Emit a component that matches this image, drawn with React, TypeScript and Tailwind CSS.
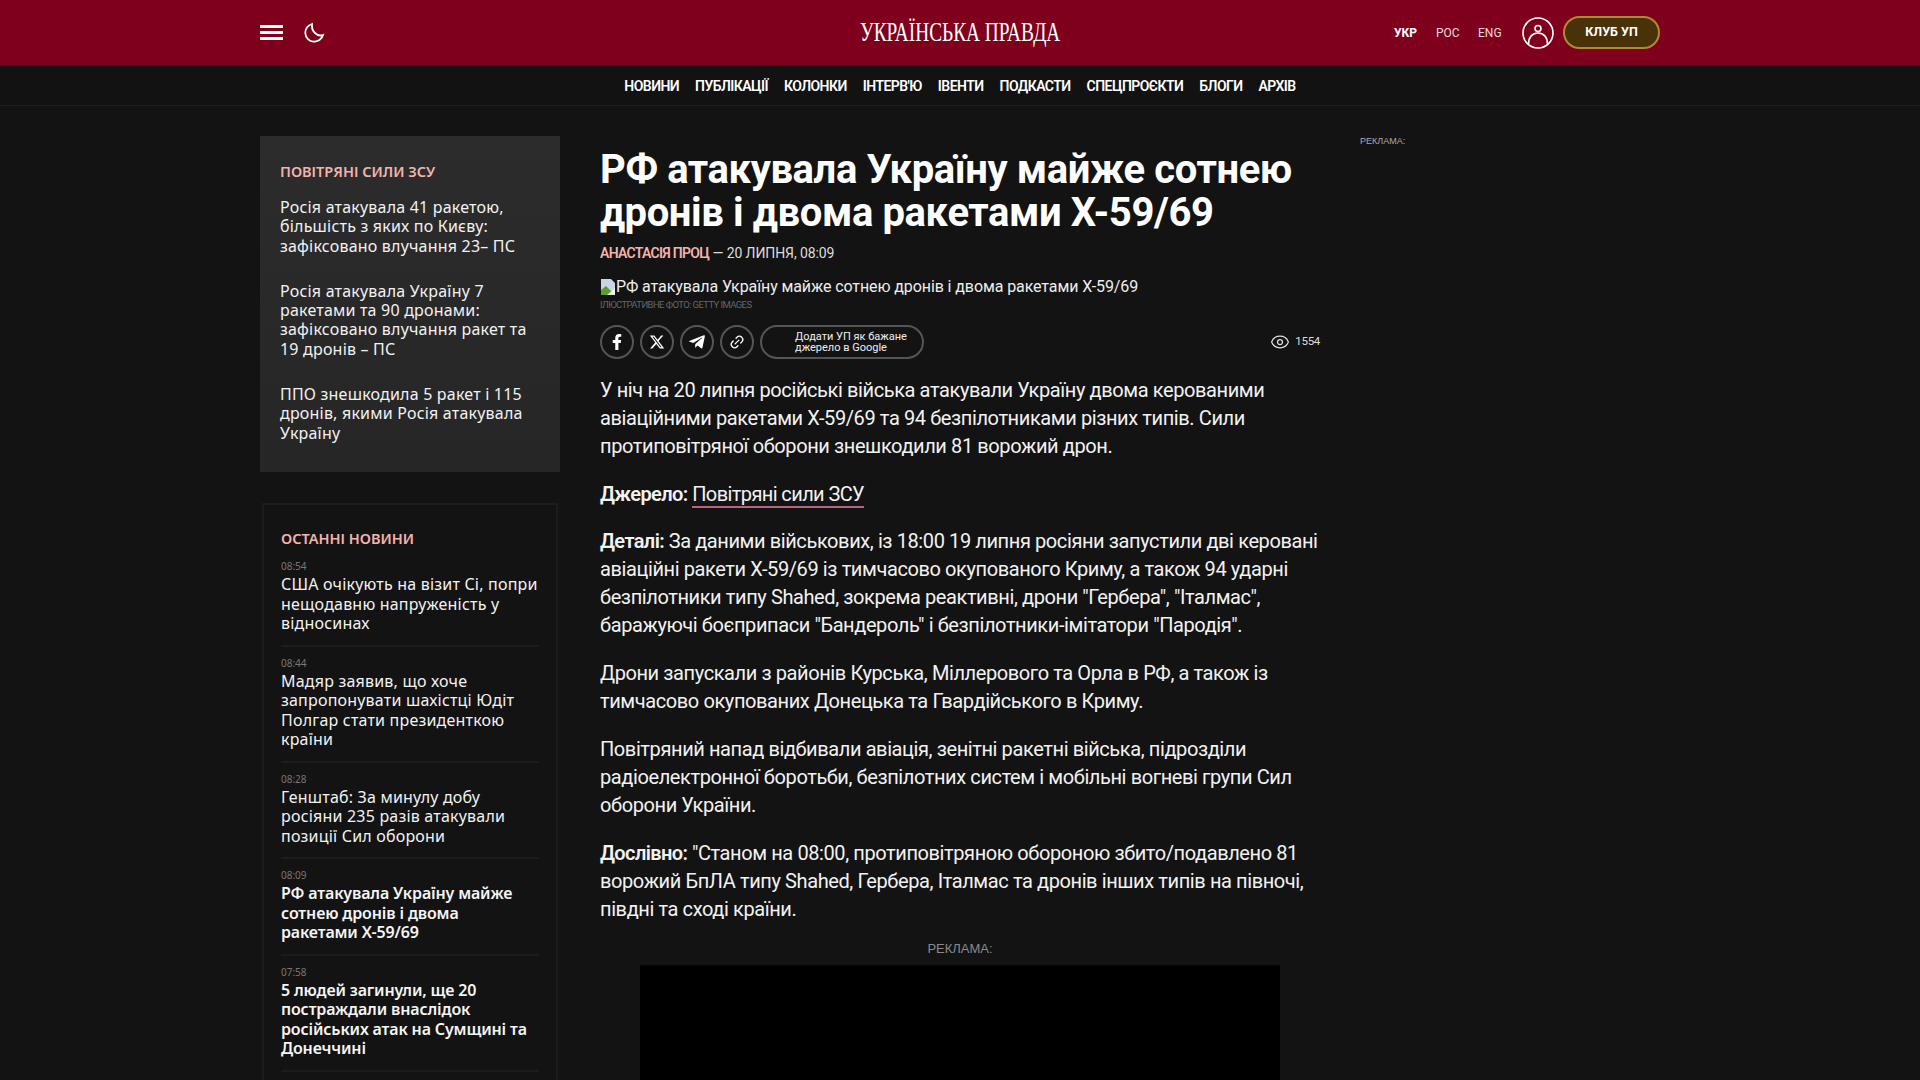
import { Eye, Link2 } from "lucide-react";
import { FaFacebookF, FaTelegramPlane } from "react-icons/fa";
import { FaXTwitter } from "react-icons/fa6";

const navItems = ["Новини", "Публікації", "Колонки", "Інтерв'ю", "Івенти", "Подкасти", "Спецпроєкти", "Блоги", "Архів"];

const topic = [
  ["Росія атакувала 41 ракетою,", "більшість з яких по Києву:", "зафіксовано влучання 23– ПС"],
  ["Росія атакувала Україну 7", "ракетами та 90 дронами:", "зафіксовано влучання ракет та", "19 дронів – ПС"],
  ["ППО знешкодила 5 ракет і 115", "дронів, якими Росія атакувала", "Україну"],
];

const latest = [
  { time: "08:54", lines: ["США очікують на візит Сі, попри", "нещодавню напруженість у", "відносинах"] },
  { time: "08:44", lines: ["Мадяр заявив, що хоче", "запропонувати шахістці Юдіт", "Полгар стати президенткою", "країни"] },
  { time: "08:28", lines: ["Генштаб: За минулу добу", "росіяни 235 разів атакували", "позиції Сил оборони"] },
  { time: "08:09", bold: true, lines: ["РФ атакувала Україну майже", "сотнею дронів і двома", "ракетами Х-59/69"] },
  { time: "07:58", bold: true, lines: ["5 людей загинули, ще 20", "постраждали внаслідок", "російських атак на Сумщині та", "Донеччині"] },
];

function Lines({ lines }: { lines: string[] }) {
  return (
    <>
      {lines.map((l) => (
        <span key={l} className="block whitespace-nowrap">{l}</span>
      ))}
    </>
  );
}

function ShareButton({ children }: { children: React.ReactNode }) {
  return (
    <span className="flex h-[34px] w-[34px] items-center justify-center rounded-full border-2 border-[#555] text-white">
      {children}
    </span>
  );
}

function Sidebar() {
  return (
    <aside className="w-[300px] shrink-0">
      <section className="h-[336px] bg-gradient-to-b from-[#2c2c2c] to-[#262626] px-5 pt-[26px]">
        <h3 className="text-[14.5px] leading-[18px] font-semibold text-[#f3b3ad] uppercase">Повітряні сили ЗСУ</h3>
        <div className="mt-[18px] space-y-[26px] text-[16px] leading-[19.3px] tracking-[0.2px] text-[#f2f2f2]">
          {topic.map((t) => (
            <p key={t[0]}><Lines lines={t} /></p>
          ))}
        </div>
      </section>
      <section className="mx-[2px] mt-[31px] border-2 border-[#1c1c1c] px-[17px] pt-[24px]">
        <h3 className="text-[14.5px] leading-[18px] font-semibold text-[#f3b3ad] uppercase">Останні новини</h3>
        <div className="mt-[12px]">
          {latest.map((n) => (
            <div key={n.time} className="mb-[9px] border-b-2 border-[#1c1c1c] pb-[11px]">
              <div className="text-[10px] leading-[14px] text-[#777]">{n.time}</div>
              <div className={`mt-[2px] text-[16px] leading-[19.5px] ${n.bold ? "font-semibold tracking-[-0.15px] text-[#f5f5f5]" : "tracking-[0.2px] text-[#f2f2f2]"}`}>
                <Lines lines={n.lines} />
              </div>
            </div>
          ))}
        </div>
      </section>
    </aside>
  );
}

function Article() {
  return (
    <article className="w-[720px] shrink-0 pt-[12px] font-['Roboto','Noto_Sans',sans-serif] text-[#f2f2f2]">
      <h1 className="text-[40px] leading-[43px] font-bold tracking-[-0.4px] text-white">
        <Lines lines={["РФ атакувала Україну майже сотнею", "дронів і двома ракетами Х-59/69"]} />
      </h1>
      <div className="mt-[10px] text-[14px] leading-[18px] tracking-[-0.1px] text-[#ddd]">
        <span className="font-semibold tracking-[-0.7px] text-[#f3b3ad]">АНАСТАСІЯ ПРОЦ</span> — 20 ЛИПНЯ, 08:09
      </div>
      <div className="mt-[15px] flex h-[20px] items-center text-[16px] leading-[20px] tracking-[-0.1px] text-[#eee]">
        <svg viewBox="0 0 16 16" className="h-4 w-4 shrink-0">
          <path d="M1 0h10l4 4v12H1z" fill="#c9d4e4" />
          <path d="M1 16V11l5-4 9 9z" fill="#5aa02c" />
          <path d="M15 16H7l8-7z" fill="#fff" opacity="0.8" />
        </svg>
        <span>РФ атакувала Україну майже сотнею дронів і двома ракетами Х-59/69</span>
      </div>
      <div className="mt-[2px] text-[9.5px] leading-[12px] tracking-[-0.6px] text-[#666] uppercase">Ілюстративне Фото: Getty Images</div>
      <div className="mt-[14px] flex items-center gap-[6px]">
        <ShareButton><FaFacebookF size={16} /></ShareButton>
        <ShareButton><FaXTwitter size={16} /></ShareButton>
        <ShareButton><FaTelegramPlane size={18} /></ShareButton>
        <ShareButton><Link2 size={16} className="-rotate-45" /></ShareButton>
        <span className="flex h-[34px] w-[164px] items-center rounded-full border-2 border-[#555] pl-[33px] text-[11px] leading-[11.5px] text-[#eee]">
          <span>Додати УП як бажане<br />джерело в Google</span>
        </span>
        <span className="ml-auto flex items-center gap-[5px] text-[11.5px] tracking-[-0.3px] text-[#ddd]">
          <Eye size={20} strokeWidth={1.5} />
          1554
        </span>
      </div>
      <div className="mt-[17px] text-[20px] leading-[28px] tracking-[-0.4px]">
        <p><Lines lines={["У ніч на 20 липня російські війська атакували Україну двома керованими", "авіаційними ракетами Х-59/69 та 94 безпілотниками різних типів. Сили", "протиповітряної оборони знешкодили 81 ворожий дрон."]} /></p>
        <p className="mt-5">
          <b className="font-semibold tracking-[-0.6px]">Джерело:</b>{" "}
          <span className="border-b-2 border-[#b5657f] tracking-[-0.6px]">Повітряні сили ЗСУ</span>
        </p>
        <p className="mt-[19px]">
          <span className="block whitespace-nowrap"><b className="font-semibold tracking-[-0.6px]">Деталі:</b> За даними військових, із 18:00 19 липня росіяни запустили дві керовані</span>
          <Lines lines={["авіаційні ракети Х-59/69 із тимчасово окупованого Криму, а також 94 ударні", "безпілотники типу Shahed, зокрема реактивні, дрони \"Гербера\", \"Італмас\",", "баражуючі боєприпаси \"Бандероль\" і безпілотники-імітатори \"Пародія\"."]} />
        </p>
        <p className="mt-5"><Lines lines={["Дрони запускали з районів Курська, Міллерового та Орла в РФ, а також із", "тимчасово окупованих Донецька та Гвардійського в Криму."]} /></p>
        <p className="mt-5"><Lines lines={["Повітряний напад відбивали авіація, зенітні ракетні війська, підрозділи", "радіоелектронної боротьби, безпілотних систем і мобільні вогневі групи Сил", "оборони України."]} /></p>
        <p className="mt-5">
          <span className="block whitespace-nowrap"><b className="font-semibold tracking-[-0.6px]">Дослівно:</b> "Станом на 08:00, протиповітряною обороною збито/подавлено 81</span>
          <Lines lines={["ворожий БпЛА типу Shahed, Гербера, Італмас та дронів інших типів на півночі,", "півдні та сході країни."]} />
        </p>
      </div>
      <div className="mt-[18px] text-center font-['Liberation_Sans',sans-serif] text-[13px] leading-[15px] tracking-normal text-[#8a8a8a]">РЕКЛАМА:</div>
      <div className="mx-auto mt-[9px] h-[200px] w-[640px] bg-black" />
    </article>
  );
}

export default function App() {
  return (
    <div className="h-[1080px] overflow-hidden bg-[#131313] font-['Noto_Sans','Open_Sans',sans-serif]">
      <header className="h-[65px] bg-[#7f001c]">
        <div className="mx-auto grid h-full w-[1400px] grid-cols-[1fr_auto_1fr] items-center">
          <div className="flex items-center">
            <div className="flex w-[23px] flex-col gap-[3px]">
              <span className="h-[3px] bg-white" />
              <span className="h-[3px] bg-white" />
              <span className="h-[3px] bg-white" />
            </div>
            <svg viewBox="0 0 24 24" className="ml-[19px] h-6 w-6" fill="none" stroke="white" strokeWidth="1.8">
              <path d="M10 3a9 9 0 1 0 11 11c-5 2-12-3-11-11z" />
            </svg>
          </div>
          <div className="-mt-[2px] w-[200px] text-center font-['Liberation_Serif',serif] text-[28px] leading-none text-white">
            <span className="-mx-[50px] inline-block scale-x-[0.69] whitespace-nowrap">УКРАЇНСЬКА ПРАВДА</span>
          </div>
          <div className="flex items-center justify-end">
            <div className="flex items-center font-['Roboto',sans-serif] text-[12px]">
              <span className="w-[42px] font-bold text-white">УКР</span>
              <span className="w-[42px] text-[#f0d6dc]">РОС</span>
              <span className="w-[44px] text-[#f0d6dc]">ENG</span>
            </div>
            <svg viewBox="0 0 32 32" className="h-8 w-8" fill="none" stroke="white" strokeWidth="1.6">
              <circle cx="16" cy="16" r="15" />
              <circle cx="16" cy="11.5" r="3" />
              <path d="M6.5 27c0-7 4-11 9.5-11s9.5 4 9.5 11" />
            </svg>
            <span className="ml-[9px] flex h-[33px] w-[97px] items-center justify-center rounded-full border-2 border-[#b08a33] bg-[#4a3208] font-['Roboto',sans-serif] text-[12.5px] font-bold text-white">
              КЛУБ УП
            </span>
          </div>
        </div>
      </header>
      <nav className="flex h-[41px] items-center justify-center gap-4 border-b border-[#1e1e1e] bg-[#121212] pt-[3px] font-['Roboto',sans-serif] text-[14px] font-semibold tracking-[-0.55px] text-white uppercase">
        {navItems.map((n) => (
          <span key={n}>{n}</span>
        ))}
      </nav>
      <main className="mx-auto mt-[30px] flex w-[1400px] gap-10">
        <Sidebar />
        <Article />
        <div className="font-['Liberation_Sans',sans-serif] text-[9px] leading-[10px] text-[#aaa]">РЕКЛАМА:</div>
      </main>
    </div>
  );
}
